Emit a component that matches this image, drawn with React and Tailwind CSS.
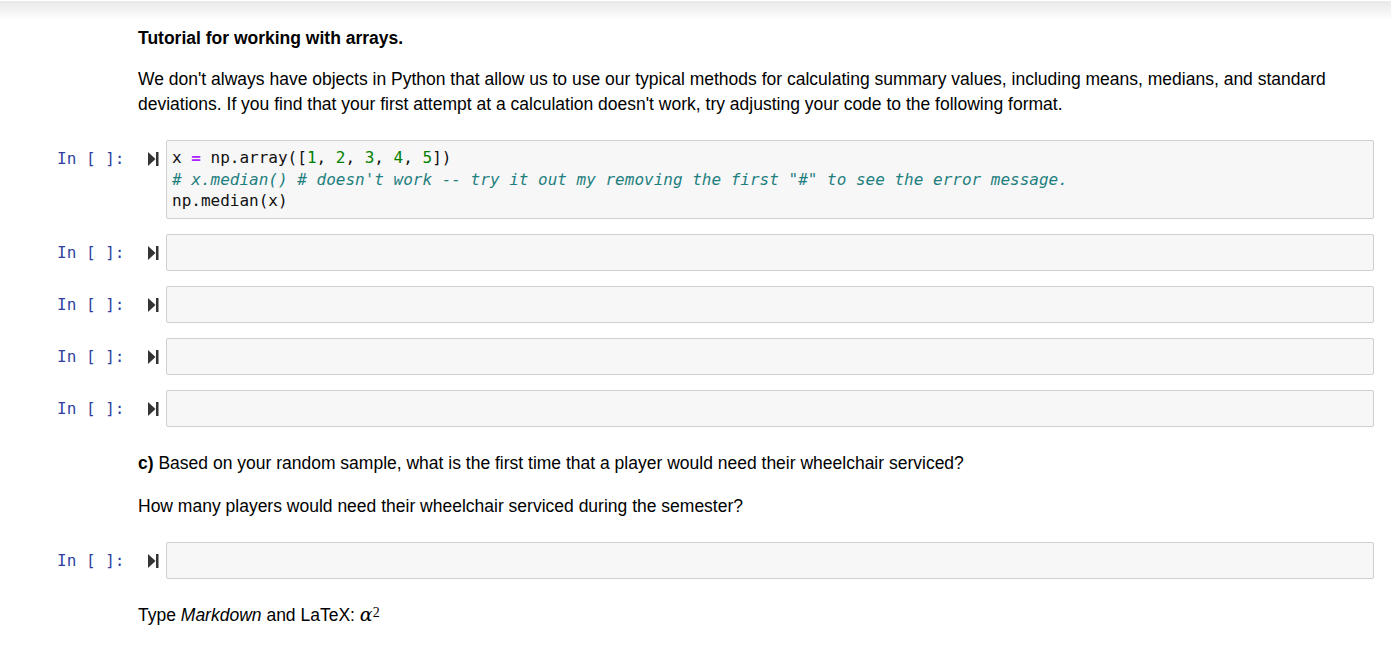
import React from 'react';

const md = { fontFamily: '"Liberation Sans", Arial, sans-serif' };
const mono = { fontFamily: '"DejaVu Sans Mono", "Liberation Mono", monospace' };

function RunIcon() {
  return (
    <svg width="11" height="14" viewBox="0 0 11 14" className="shrink-0">
      <path d="M0 0 L7.5 7 L0 14 Z" fill="#333" />
      <rect x="8" y="0" width="2.5" height="14" fill="#333" />
    </svg>
  );
}

function Cell({ children }) {
  return (
    <div className="flex items-start">
      <div
        className="w-[111px] pl-[57px] pt-[8px] text-[16px] leading-[21.5px] text-[#303f9f] whitespace-pre shrink-0"
        style={mono}
      >
        In [ ]:
      </div>
      <div className="w-[55px] pl-[37px] pt-[12px] shrink-0">
        <RunIcon />
      </div>
      <div
        className="w-[1208px] min-h-[37px] border border-[#cfcfcf] bg-[#f7f7f7] rounded-[2px] px-[5px] pt-[6px] pb-[6.5px] text-[16px] leading-[21.5px] text-[#111] whitespace-pre"
        style={mono}
      >
        {children}
      </div>
    </div>
  );
}

function Md({ children, className = '' }) {
  return (
    <div
      className={'pl-[138px] pr-[50px] text-[17.5px] leading-[25px] text-black ' + className}
      style={md}
    >
      {children}
    </div>
  );
}

export default function App() {
  return (
    <div className="w-[1391px] h-[651px] bg-white overflow-hidden relative">
      <div className="h-[20px] border-t border-white bg-gradient-to-b from-[#e8e8e8] to-white" />
      <Md className="mt-[6px] font-bold">Tutorial for working with arrays.</Md>
      <Md className="mt-[16px]">
        We don't always have objects in Python that allow us to use our typical methods for calculating summary values, including means, medians, and standard deviations. If you find that your first attempt at a calculation doesn't work, try adjusting your code to the following format.
      </Md>
      <div className="mt-[23px] flex flex-col gap-[15px]">
        <Cell>
          <div>
            x <span className="text-[#aa22ff] font-bold">=</span> np.array([<span className="text-[#008000]">1</span>, <span className="text-[#008000]">2</span>, <span className="text-[#008000]">3</span>, <span className="text-[#008000]">4</span>, <span className="text-[#008000]">5</span>])
          </div>
          <div className="italic text-[#1f7f7f]">
            # x.median() # doesn't work -- try it out my removing the first "#" to see the error message.
          </div>
          <div>np.median(x)</div>
        </Cell>
        <Cell> </Cell>
        <Cell> </Cell>
        <Cell> </Cell>
        <Cell> </Cell>
      </div>
      <Md className="mt-[24px]">
        <b>c)</b> Based on your random sample, what is the first time that a player would need their wheelchair serviced?
      </Md>
      <Md className="mt-[18px]">How many players would need their wheelchair serviced during the semester?</Md>
      <div className="mt-[23px]">
        <Cell> </Cell>
      </div>
      <Md className="mt-[23px]">
        Type <i>Markdown</i> and LaTeX:{' '}
        <span className="italic text-[19px]" style={{ fontFamily: '"DejaVu Serif", "Liberation Serif", serif' }}>α</span>
        <sup className="text-[14px] relative -top-[4px]" style={{ fontFamily: '"Liberation Serif", serif' }}>2</sup>
      </Md>
    </div>
  );
}
